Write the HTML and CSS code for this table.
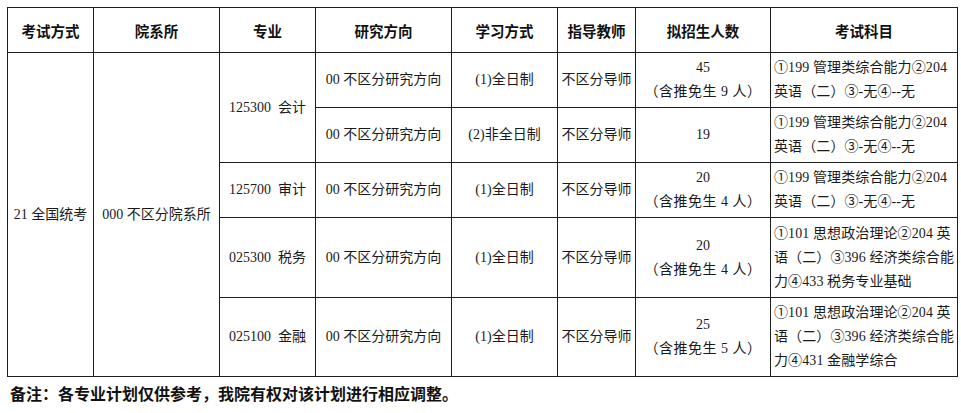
FILE: index.html
```html
<!DOCTYPE html>
<html lang="zh-CN">
<head>
<meta charset="utf-8">
<title>招生计划</title>
<link rel="stylesheet" href="styles.css">
</head>
<body>
<div class="page">
  <table class="plan">
    <colgroup>
      <col class="c1"><col class="c2"><col class="c3"><col class="c4">
      <col class="c5"><col class="c6"><col class="c7"><col class="c8">
    </colgroup>
    <thead>
      <tr class="head">
        <th>考试方式</th>
        <th>院系所</th>
        <th>专业</th>
        <th>研究方向</th>
        <th>学习方式</th>
        <th>指导教师</th>
        <th>拟招生人数</th>
        <th>考试科目</th>
      </tr>
    </thead>
    <tbody>
      <tr class="r1">
        <td rowspan="5">21 全国统考</td>
        <td rowspan="5">000 不区分院系所</td>
        <td rowspan="2">125300&nbsp; 会计</td>
        <td>00 不区分研究方向</td>
        <td>(1)全日制</td>
        <td>不区分导师</td>
        <td>45<br><span class="paren">（含推免生 9 人）</span></td>
        <td class="subj">①199 管理类综合能力②204<br>英语（二）③-无④--无</td>
      </tr>
      <tr class="r2">
        <td>00 不区分研究方向</td>
        <td>(2)非全日制</td>
        <td>不区分导师</td>
        <td>19</td>
        <td class="subj">①199 管理类综合能力②204<br>英语（二）③-无④--无</td>
      </tr>
      <tr class="r3">
        <td>125700&nbsp; 审计</td>
        <td>00 不区分研究方向</td>
        <td>(1)全日制</td>
        <td>不区分导师</td>
        <td>20<br><span class="paren">（含推免生 4 人）</span></td>
        <td class="subj">①199 管理类综合能力②204<br>英语（二）③-无④--无</td>
      </tr>
      <tr class="r4">
        <td>025300&nbsp; 税务</td>
        <td>00 不区分研究方向</td>
        <td>(1)全日制</td>
        <td>不区分导师</td>
        <td>20<br><span class="paren">（含推免生 4 人）</span></td>
        <td class="subj">①101 思想政治理论②204 英<br>语（二）③396 经济类综合能<br>力④433 税务专业基础</td>
      </tr>
      <tr class="r5">
        <td>025100&nbsp; 金融</td>
        <td>00 不区分研究方向</td>
        <td>(1)全日制</td>
        <td>不区分导师</td>
        <td>25<br><span class="paren">（含推免生 5 人）</span></td>
        <td class="subj">①101 思想政治理论②204 英<br>语（二）③396 经济类综合能<br>力④431 金融学综合</td>
      </tr>
    </tbody>
  </table>
  <p class="note">备注：各专业计划仅供参考，我院有权对该计划进行相应调整。</p>
</div>
</body>
</html>
```
FILE: styles.css
```css
html, body {
  margin: 0;
  padding: 0;
  background: #ffffff;
}

.page {
  padding: 7px 4px 0 7px;
}

.plan {
  border-collapse: collapse;
  table-layout: fixed;
  width: 950px;
  font-family: "Liberation Serif", "Noto Sans CJK SC", serif;
  font-size: 14px;
  color: #1a1a1a;
}

.c1 { width: 86px; }
.c2 { width: 126px; }
.c3 { width: 96px; }
.c4 { width: 136px; }
.c5 { width: 106px; }
.c6 { width: 78px; }
.c7 { width: 135px; }
.c8 { width: 187px; }

.plan th,
.plan td {
  border: 1.5px solid #1e1e1e;
  padding: 0;
  text-align: center;
  vertical-align: middle;
  line-height: 24px;
  white-space: nowrap;
  overflow: hidden;
}

.plan th {
  font-family: "Noto Sans CJK SC", sans-serif;
  font-weight: 700;
  font-size: 14.5px;
  color: #111;
  padding-top: 2px;
}

.head { height: 45px; }
.r1 { height: 55px; }
.r2 { height: 55px; }
.r3 { height: 55px; }
.r4 { height: 80px; }
.r5 { height: 79px; }

.plan td.subj {
  text-align: left;
  padding-left: 3px;
  font-size: 14px;
  letter-spacing: 0.1px;
}

.paren {
  letter-spacing: 0.5px;
}

.note {
  margin: 5px 0 0 3px;
  font-family: "Noto Sans CJK SC", sans-serif;
  font-weight: 700;
  font-size: 16px;
  line-height: 22px;
  color: #111;
}
```
